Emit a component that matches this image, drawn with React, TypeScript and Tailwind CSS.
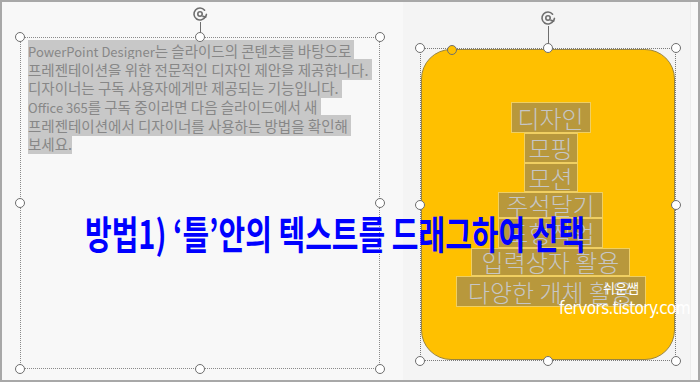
import React from "react";

type HandleProps = { pos: string; yellow?: boolean };

function Handle({ pos, yellow }: HandleProps) {
  return (
    <span
      className={`absolute w-[10px] h-[10px] rounded-full border-[1.5px] border-[#6e6e6e] ${
        yellow ? "bg-[#ffc000]" : "bg-white"
      } ${pos}`}
    />
  );
}

function RotateIcon({ pos }: { pos: string }) {
  return (
    <svg
      className={`absolute left-1/2 -translate-x-1/2 ${pos}`}
      width="16"
      height="16"
      viewBox="0 0 16 16"
      fill="none"
      stroke="#6e6e6e"
      strokeWidth="1.6"
      strokeLinecap="round"
    >
      <path d="M12.6 4.2 A6 6 0 1 0 13.4 10.6" />
      <path d="M11 10.4 L13.6 11 L14.4 8.4" />
      <circle cx="8" cy="8" r="2.2" />
    </svg>
  );
}

// [latin prefix, korean rest]
const lines: [string, string][] = [
  ["PowerPoint Designer", "는 슬라이드의 콘텐츠를 바탕으로 "],
  ["", "프레젠테이션을 위한 전문적인 디자인 제안을 제공합니다. "],
  ["", "디자이너는 구독 사용자에게만 제공되는 기능입니다. "],
  ["Office 365", "를 구독 중이라면 다음 슬라이드에서 새 "],
  ["", "프레젠테이션에서 디자이너를 사용하는 방법을 확인해 "],
  ["", "보세요."],
];

const rows = [
  { t: "디자인", cls: "w-[80px] h-[31px]" },
  { t: "모핑", cls: "w-[54px] h-[30px]" },
  { t: "모션", cls: "w-[54px] h-[29px]" },
  { t: "주석달기", cls: "w-[105px] h-[26px]" },
  { t: "도형작업", cls: "w-[105px] h-[30px]" },
  { t: "입력상자 활용", cls: "w-[159px] h-[28px]" },
  { t: "다양한 개체 활용", cls: "w-[190px] h-[31px]" },
];

export default function App() {
  return (
    <div className="relative w-[700px] h-[382px] overflow-hidden border-2 border-[#a8a8a8] bg-[#f4f4f4] flex font-['Noto_Sans_CJK_KR',sans-serif]">
      {/* Left slide: text placeholder */}
      <div className="w-[401px] h-full bg-[#f8f8f8] pl-[18px] pt-[35px]">
        <div className="relative w-[360px] h-[332px] border border-dotted border-[#8a8a8a] pl-[7px] pt-[4px]">
          <RotateIcon pos="top-[-32px]" />
          <span className="absolute left-1/2 top-[-16px] h-[16px] w-px bg-[#6e6e6e]" />
          <Handle pos="left-[-6px] top-[-6px]" />
          <Handle pos="left-1/2 -translate-x-1/2 top-[-6px]" />
          <Handle pos="right-[-6px] top-[-6px]" />
          <Handle pos="left-[-6px] top-1/2 -translate-y-1/2" />
          <Handle pos="right-[-6px] top-1/2 -translate-y-1/2" />
          <Handle pos="left-[-6px] bottom-[-6px]" />
          <Handle pos="left-1/2 -translate-x-1/2 bottom-[-6px]" />
          <Handle pos="right-[-6px] bottom-[-6px]" />

          <div className="text-[14.5px] leading-[18.2px] text-[#878787] whitespace-pre">
            {lines.map(([en, ko]) => (
              <div key={ko}>
                <span className="bg-[#c8c8c8]">
                  {en && <span className="text-[13px]">{en}</span>}
                  {ko}
                </span>
              </div>
            ))}
          </div>
        </div>
      </div>

      {/* Right slide: rounded shape */}
      <div className="relative flex-1 h-full bg-[#f4f4f4] pl-[17px] pt-[46px]">
        <div className="relative w-[256px] h-[313px] border border-dotted border-[#7a7a7a]">
          <div className="w-full h-full rounded-[30px] bg-[#ffc000] border border-[#9a8540] flex flex-col items-center pt-[52px] pl-[5px]">
            {rows.map((r) => (
              <div
                key={r.t}
                className={`${r.cls} shrink-0 flex items-center justify-center bg-[#b8983c] border border-[#f0cf62] text-[24px] leading-none font-light text-[#c6c6c6] whitespace-nowrap`}
              >
                {r.t}
              </div>
            ))}
          </div>

          <RotateIcon pos="top-[-39px]" />
          <span className="absolute left-1/2 top-[-23px] h-[23px] w-px bg-[#6e6e6e]" />
          <Handle pos="left-[-6px] top-[-6px]" />
          <Handle pos="left-1/2 -translate-x-1/2 top-[-6px]" />
          <Handle pos="right-[-6px] top-[-6px]" />
          <Handle pos="left-[-6px] top-1/2 -translate-y-1/2" />
          <Handle pos="right-[-6px] top-1/2 -translate-y-1/2" />
          <Handle pos="left-[-6px] bottom-[-6px]" />
          <Handle pos="left-1/2 -translate-x-1/2 bottom-[-6px]" />
          <Handle pos="right-[-6px] bottom-[-6px]" />
          <Handle pos="left-[26px] top-[-4px]" yellow />
        </div>

        {/* watermark */}
        <div className="absolute left-[200px] top-[279px] text-[13px] leading-none text-white">
          쉬운쌤
        </div>
        <div className="absolute left-[156px] top-[298px] text-[17px] leading-none text-white tracking-[-0.6px] font-['DejaVu_Sans_Condensed','DejaVu_Sans',sans-serif] font-light">
          fervors.tistory.com
        </div>
      </div>
      <div className="w-[8px] h-full bg-[#f9f9f9] border-l border-[#ececec]" />

      {/* Caption over both slides */}
      <div className="absolute left-[83px] top-[216px] text-[29px] leading-none font-bold text-[#0000ff] whitespace-nowrap scale-y-[1.35] origin-center">
        방법1) ‘틀’안의 텍스트를 드래그하여 선택
      </div>
    </div>
  );
}
